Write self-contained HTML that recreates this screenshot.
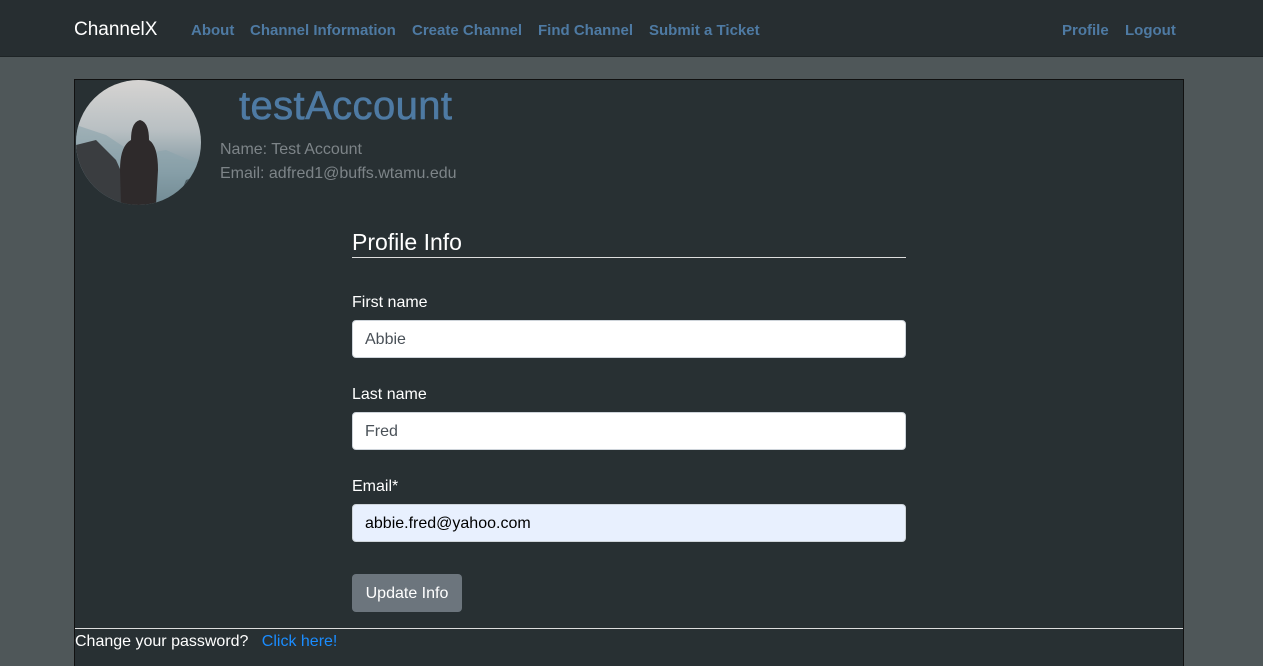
<!DOCTYPE html>
<html><head><style>
*{box-sizing:border-box;margin:0;padding:0}
html,body{width:1263px;height:666px;overflow:hidden}
body{background:#4f5759;font-family:"Liberation Sans",Arial,sans-serif;position:relative}
.nav{position:absolute;left:0;top:0;width:1263px;height:57px;background:#272e31;border-bottom:1px solid #1e2426}
.nav a{position:absolute;top:22px;font-size:15px;font-weight:bold;color:#4e7aa3;text-decoration:none}
.brand{position:absolute;left:74px;top:19px;font-size:19px;color:#fff}
.card{position:absolute;left:74px;top:79px;width:1110px;height:587px;background:#283033;border:1px solid #111;border-bottom:none}
.av{position:absolute;left:1px;top:0;width:125px;height:125px;border-radius:50%;overflow:hidden;background:linear-gradient(180deg,#d6d4d2 0%,#b9c0c3 40%,#7f96a0 75%,#4d6570 100%)}
.abs{position:absolute}
.inp{position:absolute;left:277px;width:554px;height:38px;border:1px solid #ced4da;border-radius:4px;background:#fff;font-size:16px;color:#495057;padding:10px 12px}
.lab{position:absolute;left:277px;font-size:16px;color:#fff}
</style></head><body>
<div class="nav">
<div class="brand">ChannelX</div>
<a style="left:191px">About</a><a style="left:250px">Channel Information</a><a style="left:412px">Create Channel</a><a style="left:538px">Find Channel</a><a style="left:649px">Submit a Ticket</a>
<a style="left:1062px">Profile</a><a style="left:1125px">Logout</a>
</div>
<div class="card">
<div class="av"><svg width="125" height="125" viewBox="0 0 125 125"><path d="M0 45 L30 55 L60 75 L90 70 L125 85 L125 125 L0 125Z" fill="#8aa3ac" opacity=".6"/><path d="M0 65 L20 60 L40 80 L60 125 L0 125Z" fill="#3a3d40"/><path d="M100 125 L110 100 L125 95 L125 125Z" fill="#4a5a60"/><path d="M55 60 Q55 42 64 40 Q73 42 73 60 Q82 66 82 90 L80 125 L45 125 L44 90 Q44 66 55 60Z" fill="#2e2a2b"/></svg></div>
<div class="abs" style="left:164px;top:4px;font-size:40px;letter-spacing:0.4px;color:#4e7aa3;-webkit-text-stroke:0.6px #4e7aa3">testAccount</div>
<div class="abs" style="left:145px;top:61px;font-size:16px;color:#7d8488">Name: Test Account</div>
<div class="abs" style="left:145px;top:85px;font-size:16px;color:#7d8488">Email: adfred1@buffs.wtamu.edu</div>
<div class="abs" style="left:277px;top:149px;font-size:23px;color:#fff">Profile Info</div>
<div class="abs" style="left:277px;top:177px;width:554px;height:1px;background:#ddd"></div>
<div class="lab" style="top:214px">First name</div>
<div class="inp" style="top:240px">Abbie</div>
<div class="lab" style="top:306px">Last name</div>
<div class="inp" style="top:332px">Fred</div>
<div class="lab" style="top:398px">Email*</div>
<div class="inp" style="top:424px;background:#e8f0fe;color:#000">abbie.fred@yahoo.com</div>
<div class="abs" style="left:277px;top:494px;width:110px;height:38px;background:#6c757d;border-radius:4px;color:#fff;font-size:16px;text-align:center;line-height:39px">Update Info</div>
<div class="abs" style="left:0;top:548px;width:1108px;height:1px;background:#ddd"></div>
<div class="abs" style="left:0;top:553px;font-size:16px;color:#fff">Change your password? &nbsp; <span style="color:#1a8cff">Click here!</span></div>
</div>
</body></html>
